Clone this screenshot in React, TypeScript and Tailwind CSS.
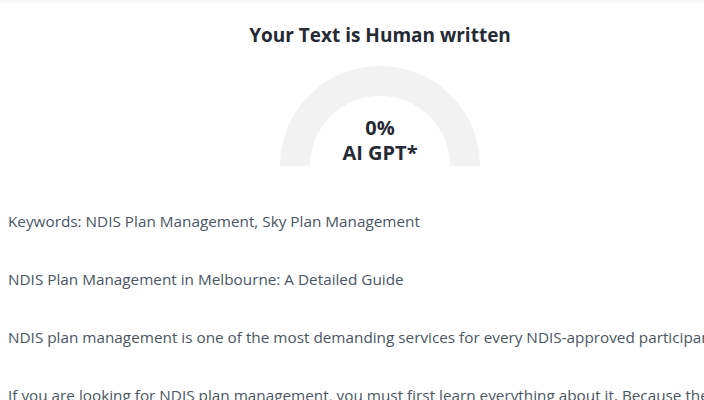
export default function App() {
  return (
    <div className="h-[400px] w-[704px] overflow-hidden bg-white font-['Open_Sans',sans-serif]">
      <div className="h-[5px] w-full bg-gradient-to-b from-[#f7f7f7] to-white" />
      <div className="w-[760px]">
        <h2 className="mt-[16px] text-center text-[19px] font-bold leading-[28px] text-[#252a34]">
          Your Text is Human written
        </h2>
        <div className="relative mx-auto mt-[17px] h-[100px] w-[200px]">
          <svg width="200" height="100" viewBox="0 0 200 100" className="absolute inset-0">
            <path d="M0 100 A100 100 0 0 1 200 100 L170 100 A70 70 0 0 0 30 100 Z" fill="#f2f2f2" />
          </svg>
          <div className="absolute inset-x-0 top-[49px] text-center text-[20px] font-bold leading-[25px] text-[#252a34]">
            <div>0%</div>
            <div>AI GPT*</div>
          </div>
        </div>
        <div className="mt-[43px] pl-[8px] text-[15.3px] leading-[24px] text-[#4b5563] whitespace-nowrap">
          <p className="mb-[34px]">Keywords: NDIS Plan Management, Sky Plan Management</p>
          <p className="mb-[34px]">NDIS Plan Management in Melbourne: A Detailed Guide</p>
          <p className="mb-[34px]">
            NDIS plan management is one of the most demanding services for every NDIS-approved participant in Australia.
          </p>
          <p className="mb-[34px]">
            If you are looking for NDIS plan management, you must first learn everything about it. Because there are
          </p>
        </div>
      </div>
    </div>
  );
}
